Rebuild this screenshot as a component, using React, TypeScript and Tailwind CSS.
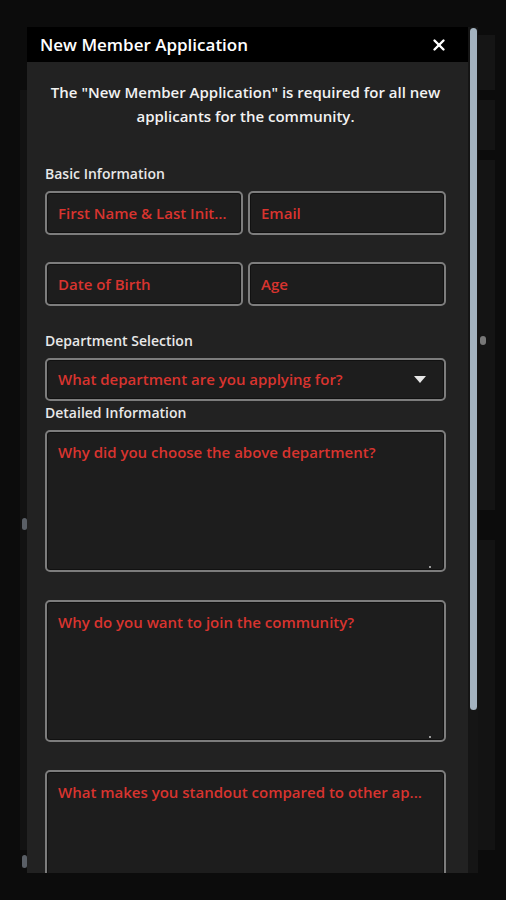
import { X } from "lucide-react";

const font = { fontFamily: '"Open Sans", "Liberation Sans", sans-serif' };

/** Campo de uma linha com placeholder vermelho. */
function TextField({ placeholder }: { placeholder: string }) {
  return (
    <input
      placeholder={placeholder}
      className="h-[44px] w-full min-w-0 truncate rounded-[5px] border-2 border-[#7d7d7d] bg-[#1d1d1d] px-[11px] text-[15px] font-semibold text-white shadow-[inset_0_0_0_1px_#111] outline-none placeholder:text-[#d8342f]"
    />
  );
}

function TextArea({ placeholder }: { placeholder: string }) {
  return (
    <div className="relative">
      <textarea
        placeholder={placeholder}
        className="block h-[142px] w-full resize-none overflow-hidden whitespace-nowrap rounded-[5px] border-2 border-[#7d7d7d] bg-[#1d1d1d] px-[11px] pt-[9px] text-[15px] font-semibold text-white shadow-[inset_0_0_0_1px_#111] outline-none placeholder:text-[#d8342f]"
      />
      <span className="absolute bottom-[4px] right-[15px] size-[2px] bg-[#9a9a9a]" />
    </div>
  );
}

function Label({ children }: { children: React.ReactNode }) {
  return <p className="text-[14px] font-semibold leading-[20px] text-[#e8e8e8]">{children}</p>;
}

export default function App() {
  return (
    <div className="relative h-[900px] w-[506px] overflow-hidden bg-[#0c0c0c]" style={font}>
      {/* página de fundo, apagada atrás do modal */}
      <div className="absolute left-[20px] top-[90px] h-[760px] w-[10px] bg-[#121212]" />
      <div className="absolute left-[22px] top-[518px] h-[12px] w-[5px] rounded-sm bg-[#5a5f66]" />
      <div className="absolute left-[22px] top-[855px] h-[13px] w-[5px] rounded-sm bg-[#5a5f66]" />
      <div className="absolute left-[478px] top-[35px] h-[55px] w-[17px] bg-[#151515]" />
      <div className="absolute left-[478px] top-[100px] h-[50px] w-[17px] bg-[#141414]" />
      <div className="absolute left-[478px] top-[160px] h-[350px] w-[17px] bg-[#141414]" />
      <div className="absolute left-[478px] top-[540px] h-[310px] w-[17px] bg-[#131313]" />
      <div className="absolute left-[480px] top-[336px] h-[9px] w-[6px] rounded-sm bg-[#777]" />

      <div className="relative ml-[27px] mt-[27px] flex h-[846px] w-[451px]">
        <div className="flex w-[441px] flex-col overflow-hidden bg-[#222222]">
          <div className="flex h-[35px] shrink-0 items-center justify-between bg-black pl-[13px] pr-[20px]">
            <h2 className="text-[17px] font-semibold text-white">New Member Application</h2>
            <X size={18} strokeWidth={3.2} className="text-white" />
          </div>

          <div className="pl-[18px] pr-[22px] pt-[18px]">
            <p className="text-center text-[15px] font-semibold leading-[24px] text-[#f2f2f2]">
              The "New Member Application" is required for all new applicants for the community.
            </p>

            <div className="mt-[36px]">
              <Label>Basic Information</Label>
              <div className="mt-[7px] grid grid-cols-2 gap-x-[5px] gap-y-[27px]">
                <TextField placeholder="First Name & Last Initial" />
                <TextField placeholder="Email" />
                <TextField placeholder="Date of Birth" />
                <TextField placeholder="Age" />
              </div>
            </div>

            <div className="mt-[25px]">
              <Label>Department Selection</Label>
              <div className="mt-[7px] flex h-[43px] items-center justify-between rounded-[5px] border-2 border-[#7d7d7d] bg-[#1d1d1d] pl-[11px] pr-[18px] shadow-[inset_0_0_0_1px_#111]">
                <span className="text-[15px] font-semibold text-[#d8342f]">
                  What department are you applying for?
                </span>
                <svg width="12" height="7" viewBox="0 0 12 7">
                  <path d="M0 0h12L6 7z" fill="#e6e6e6" />
                </svg>
              </div>
            </div>

            <div className="mt-[2px]">
              <Label>Detailed Information</Label>
              <div className="mt-[7px] flex flex-col gap-[28px]">
                <TextArea placeholder="Why did you choose the above department?" />
                <TextArea placeholder="Why do you want to join the community?" />
                <TextArea placeholder="What makes you standout compared to other ap..." />
              </div>
            </div>
          </div>
        </div>

        {/* barra de rolagem */}
        <div className="w-[10px] bg-[#151515] pl-[2px] pt-[1px]">
          <div className="h-[682px] w-[7px] rounded-full bg-[#a3b2bf]" />
        </div>
      </div>
    </div>
  );
}
